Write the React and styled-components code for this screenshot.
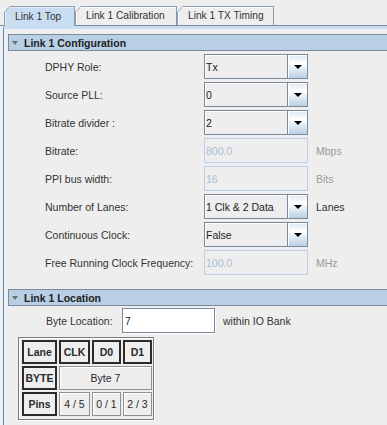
import React from "react"
import styled, { createGlobalStyle } from "styled-components"

const Global = createGlobalStyle`
  html, body { margin:0; padding:0; background:#eeeeee; }
  body { font-family:"Liberation Sans", Arial, sans-serif; color:#333; }
`

const Page = styled.div`
  width:387px;
  height:425px;
  overflow:hidden;
  background:#eeeeee;
`

const TabStrip = styled.div`
  display:flex;
  align-items:flex-end;
  height:26px;
  box-sizing:border-box;
  padding-left:4px;
  border-bottom:1px solid #7a8a99;
`

const Tab = styled.div`
  position:relative;
  z-index:${p => p.$active ? 2 : 1};
  width:${p => p.$w}px;
  height:${p => p.$active ? 20 : 19}px;
  margin-bottom:${p => p.$active ? -1 : 0}px;
  box-sizing:border-box;
  padding:1px 1px 0 1px;
  background:#8c9db0;
  clip-path:polygon(0 6px, 6px 0, 100% 0, 100% 100%, 0 100%);
`

const TabFace = styled.div`
  height:100%;
  box-sizing:border-box;
  display:flex;
  align-items:center;
  padding:0 0 1px 10px;
  background:${p => p.$active ? "#c8ddf2" : "#eeeeee"};
  box-shadow:inset 1px 1px 0 ${p => p.$active ? "#e4eef8" : "#ffffff"};
  clip-path:polygon(0 5px, 5px 0, 100% 0, 100% 100%, 0 100%);
  font-size:10.2px;
  color:#333;
  white-space:nowrap;
`

const Panel = styled.div`
  margin-left:3px;
  height:400px;
  border-left:1px solid #6382bf;
  border-top:3px solid #c8ddf2;
  padding:5px 0 0 4px;
`

const SectionHeader = styled.div`
  display:flex;
  align-items:center;
  height:17px;
  box-sizing:border-box;
  margin-right:-20px;
  margin-top:${p => p.$top || 0}px;
  padding-left:3px;
  background:#b8cfe5;
  border:1px solid #7a8a99;
  font-size:10.5px;
  font-weight:bold;
  color:#222;
`

const Caret = styled.span`
  width:0;
  height:0;
  border-left:3px solid transparent;
  border-right:3px solid transparent;
  border-top:4px solid #6f6f6f;
  margin-right:6px;
`

const FormGrid = styled.div`
  display:grid;
  grid-template-columns:151px 104px auto;
  grid-auto-rows:25px;
  column-gap:8px;
  row-gap:3px;
  margin-top:3px;
  padding-left:37px;
  align-items:center;
  font-size:10.5px;
`

const Label = styled.span`
  color:#333;
  white-space:nowrap;
`

const Unit = styled.span`
  color:${p => p.$muted ? "#9a9a9a" : "#333"};
`

const Combo = styled.div`
  display:flex;
  height:25px;
  box-sizing:border-box;
  border:1px solid #7a8a99;
`

const ComboText = styled.div`
  flex:1;
  display:flex;
  align-items:center;
  padding-left:1px;
  background:#eeeeee;
  box-shadow:inset 1px 1px 0 #ffffff;
  border-right:1px solid #7a8a99;
  color:#222;
`

const ComboButton = styled.div`
  width:19px;
  display:flex;
  align-items:center;
  justify-content:center;
  background:linear-gradient(#dde8f3, #ffffff 35%, #b8cfe5);
  box-shadow:inset 1px 1px 0 #ffffff;
`

const Arrow = styled.span`
  width:0;
  height:0;
  border-left:4px solid transparent;
  border-right:4px solid transparent;
  border-top:4px solid #000;
`

const Field = styled.div`
  height:25px;
  box-sizing:border-box;
  display:flex;
  align-items:center;
  padding-left:${p => p.$disabled ? 1 : 2}px;
  border:1px solid ${p => p.$disabled ? "#b8cfe5" : "#7a8a99"};
  background:${p => p.$disabled ? "#eeeeee" : "#ffffff"};
  box-shadow:${p => p.$disabled ? "none" : "1px 1px 0 #ffffff"};
  color:${p => p.$disabled ? "#a9bfd6" : "#222"};
  font-size:10.5px;
`

const LocationRow = styled.div`
  display:grid;
  grid-template-columns:68px 93px auto;
  column-gap:8px;
  align-items:center;
  margin-top:2px;
  padding-left:38px;
  font-size:10.5px;
`

const PinTable = styled.div`
  display:grid;
  grid-template-columns:35px 31px 29px 29px;
  grid-auto-rows:24px;
  gap:2px;
  width:max-content;
  margin:4px 0 0 10px;
  padding:2px 1px 3px 3px;
  border:1px solid #7b7b7b;
  box-shadow:1px 1px 0 #ffffff, inset 1px 1px 0 #ffffff;
  font-size:10.5px;
`

const Cell = styled.div`
  display:flex;
  align-items:center;
  justify-content:center;
  box-sizing:border-box;
  grid-column:${p => p.$span ? `span ${p.$span}` : "auto"};
  font-weight:${p => p.$head ? "bold" : "normal"};
  color:#2a2a2a;
  border:${p => p.$head ? "2px solid #2b2b2b" : "1px solid #8f8f8f"};
  box-shadow:${p => p.$head ? "none" : "inset 1px 1px 0 #ffffff"};
`

const rows = [
  { label: "DPHY Role:", kind: "combo", value: "Tx" },
  { label: "Source PLL:", kind: "combo", value: "0" },
  { label: "Bitrate divider :", kind: "combo", value: "2" },
  { label: "Bitrate:", kind: "field", value: "800.0", unit: "Mbps", muted: true },
  { label: "PPI bus width:", kind: "field", value: "16", unit: "Bits", muted: true },
  { label: "Number of Lanes:", kind: "combo", value: "1 Clk & 2 Data", unit: "Lanes" },
  { label: "Continuous Clock:", kind: "combo", value: "False" },
  { label: "Free Running Clock Frequency:", kind: "field", value: "100.0", unit: "MHz", muted: true },
]

const App = () => {
  return (
    <Page>
      <Global />
      <TabStrip>
        <Tab $active $w={71}><TabFace $active>Link 1 Top</TabFace></Tab>
        <Tab $w={102}><TabFace>Link 1 Calibration</TabFace></Tab>
        <Tab $w={97}><TabFace>Link 1 TX Timing</TabFace></Tab>
      </TabStrip>
      <Panel>
        <SectionHeader><Caret />Link 1 Configuration</SectionHeader>
        <FormGrid>
          {rows.map(r => (
            <React.Fragment key={r.label}>
              <Label>{r.label}</Label>
              {r.kind === "combo" ? (
                <Combo>
                  <ComboText>{r.value}</ComboText>
                  <ComboButton><Arrow /></ComboButton>
                </Combo>
              ) : (
                <Field $disabled>{r.value}</Field>
              )}
              <Unit $muted={r.muted}>{r.unit || ""}</Unit>
            </React.Fragment>
          ))}
        </FormGrid>
        <SectionHeader $top={14}><Caret />Link 1 Location</SectionHeader>
        <LocationRow>
          <Label>Byte Location:</Label>
          <Field>7</Field>
          <Unit>within IO Bank</Unit>
        </LocationRow>
        <PinTable>
          <Cell $head>Lane</Cell>
          <Cell $head>CLK</Cell>
          <Cell $head>D0</Cell>
          <Cell $head>D1</Cell>
          <Cell $head>BYTE</Cell>
          <Cell $span={3}>Byte 7</Cell>
          <Cell $head>Pins</Cell>
          <Cell>4 / 5</Cell>
          <Cell>0 / 1</Cell>
          <Cell>2 / 3</Cell>
        </PinTable>
      </Panel>
    </Page>
  )
}

export default App
